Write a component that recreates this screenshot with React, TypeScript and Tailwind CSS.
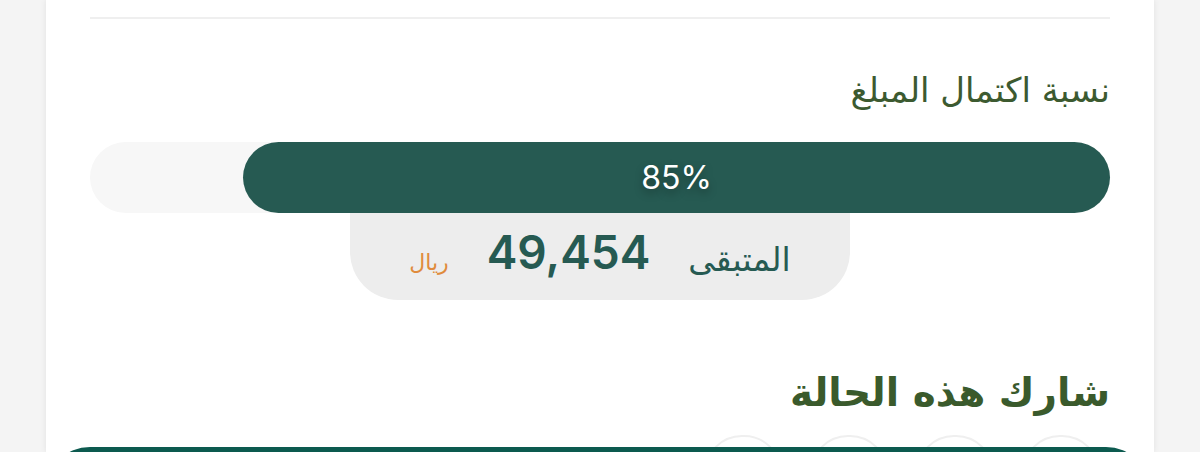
export default function App() {
  const arabic = "font-['DejaVu_Sans','Noto_Sans',sans-serif]";
  return (
    <div className="relative h-[452px] w-[1200px] overflow-hidden bg-[#f4f4f4]">
      <div
        dir="rtl"
        className={`mx-[46px] h-full bg-white px-[44px] pt-[17px] shadow-[0_0_6px_rgba(0,0,0,0.08)] ${arabic}`}
      >
        <div className="h-[2px] bg-[#efefef]" />

        <h3 className="mt-[51px] text-[34px] leading-[40px] text-[#3c5a30]">
          نسبة اكتمال المبلغ
        </h3>

        <div className="mt-[32px] flex h-[71px] rounded-full bg-[#f7f7f7]">
          <div className="flex h-full w-[85%] items-center justify-center rounded-full bg-[#265a52] font-['Inter',sans-serif] text-[32px] text-white [text-shadow:0_4px_8px_rgba(0,0,0,0.35)]">
            85%
          </div>
        </div>

        <div className="mx-auto flex h-[87px] w-[500px] items-center justify-center gap-[38px] rounded-b-[48px] bg-[#ededed]">
          <span className="mt-[6px] text-[33px] text-[#265a52]">المتبقى</span>
          <span className="mb-[8px] font-['Inter',sans-serif] text-[46px] font-semibold text-[#265a52]">
            49,454
          </span>
          <span className="mt-[12px] text-[22px] text-[#e08b3c]">ريال</span>
        </div>

        <h2 className="mt-[68px] text-[39px] font-bold leading-[50px] text-[#3a5a2c]">
          شارك هذه الحالة
        </h2>

        <div className="mt-[17px] flex gap-[28px] pr-[10px]">
          {[0, 1, 2, 3].map((i) => (
            <div
              key={i}
              className="h-[76px] w-[78px] rounded-full border-2 border-[#efefef]"
            />
          ))}
        </div>
      </div>

      <div className="absolute left-[46px] right-[50px] top-[447px] h-[60px] rounded-t-[44px] bg-[#0c5a4f]" />
    </div>
  );
}
